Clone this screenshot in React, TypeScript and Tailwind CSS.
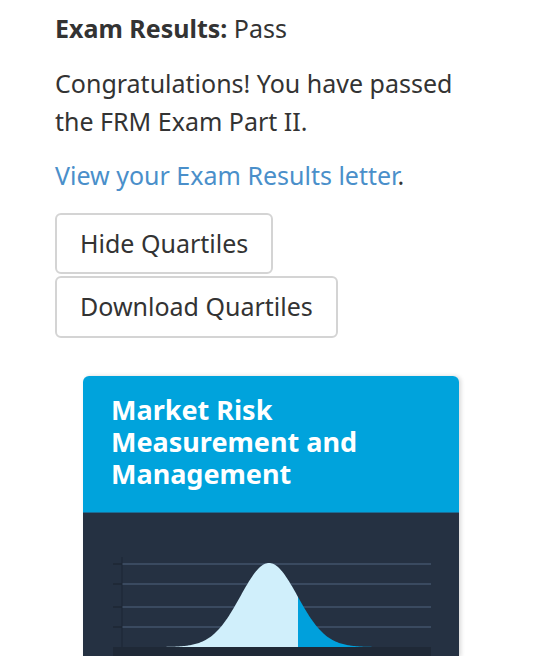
import React from "react";

// bell curve, card-local coords
function bell(from: number, to: number, closeAt?: number) {
  const mu = 186;
  const sigma = 28.5;
  const base = 134;
  const h = 84;
  const pts: string[] = [];
  for (let x = from; x <= to; x += 1) {
    const y = base - h * Math.exp(-((x - mu) ** 2) / (2 * sigma * sigma));
    pts.push(`${x},${y.toFixed(2)}`);
  }
  return `M${from},${base} L${pts.join(" L")} L${closeAt ?? to},${base} Z`;
}

function Chart() {
  const grid = [51, 71, 94, 114];
  return (
    <svg width="376" height="144" viewBox="0 0 376 144" className="block">
      {grid.map((y) => (
        <g key={y}>
          <line x1="30" x2="39" y1={y} y2={y} stroke="#1f2937" strokeWidth="2" />
          <line x1="39" x2="348" y1={y} y2={y} stroke="#3a4a60" strokeWidth="2" />
        </g>
      ))}
      <line x1="39" x2="39" y1="44" y2="134" stroke="#1d2634" strokeWidth="1" />
      <rect x="30" y="134" width="318" height="10" fill="#1f2937" />
      <path d={bell(70, 215)} fill="#d0effb" />
      <path d={bell(215, 300, 213)} fill="#00a0dc" />
    </svg>
  );
}

export default function App() {
  return (
    <div
      className="bg-white text-[#333333] pl-[55px] pr-[20px] pt-[9px] h-[656px] overflow-hidden"
      style={{ fontFamily: '"Noto Sans", "Open Sans", sans-serif' }}
    >
      <p className="text-[25px] leading-[38px]">
        <span className="font-bold">Exam Results:</span> Pass
      </p>
      <p className="text-[25px] leading-[38px] mt-[17px] w-[410px]">
        Congratulations! You have passed the FRM Exam Part II.
      </p>
      <p className="text-[25px] leading-[38px] mt-[16px]">
        <a className="text-[#4a8fca]">View your Exam Results letter</a>.
      </p>

      <div className="mt-[19px] flex flex-col items-start gap-[2px]">
        <button className="h-[61px] px-[23px] text-[25px] border-2 border-[#d4d4d4] rounded-[6px] bg-white text-[#333333]">
          Hide Quartiles
        </button>
        <button className="h-[62px] px-[23px] text-[25px] border-2 border-[#d4d4d4] rounded-[6px] bg-white text-[#333333]">
          Download Quartiles
        </button>
      </div>

      <div className="mt-[38px] ml-[28px] w-[376px] rounded-t-[6px] overflow-hidden shadow-[2px_0_4px_rgba(0,0,0,0.15)]">
        <div className="bg-[#00a3dc] pt-[18px] pb-[22px] px-[28px] h-[136px]">
          <h2 className="text-white font-bold text-[27px] leading-[32px]">
            Market Risk Measurement and Management
          </h2>
        </div>
        <div className="bg-[#253142] border-t border-[#1b6d96]">
          <Chart />
        </div>
      </div>
    </div>
  );
}
